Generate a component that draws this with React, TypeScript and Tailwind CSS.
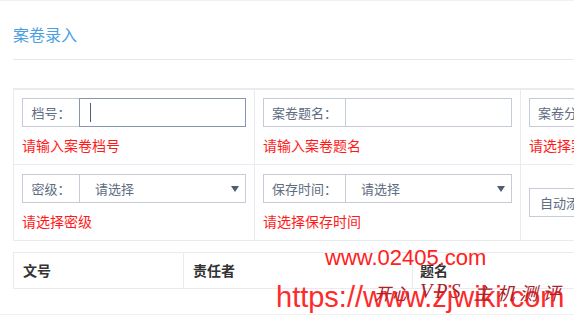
import React from "react";

interface FieldProps {
  label: string;
  labelWidth: string;
  error: string;
  select?: boolean;
  focused?: boolean;
}

function Field(props: Readonly<FieldProps>) {
  const { label, labelWidth, error, select, focused } = props;
  return (
    <div>
      <div className="flex h-[29px] text-[13px]">
        <div
          className={`${labelWidth} shrink-0 flex items-center justify-center border border-r-0 border-[#c5ccd8] text-[#5e6d82]`}
        >
          {label}
        </div>
        <div
          className={`relative flex-1 flex items-center border ${
            focused ? "border-[#8796ad]" : "border-[#c5ccd8]"
          }`}
        >
          {focused && <div className="ml-[10px] w-px h-[19px] bg-[#4a6080]" />}
          {select && (
            <>
              <span className="pl-[15px] text-[#5e6d82]">请选择</span>
              <svg
                className="absolute right-[6px] top-[11px]"
                width="8"
                height="6"
                viewBox="0 0 8 6"
              >
                <path d="M0 0H8L4 6Z" fill="#4d5d73" />
              </svg>
            </>
          )}
        </div>
      </div>
      <p className="mt-[8px] leading-[20px] text-[14px] text-[#ff1a1a] whitespace-nowrap">
        {error}
      </p>
    </div>
  );
}

export default function App() {
  return (
    <div className="relative w-[574px] h-[316px] overflow-hidden bg-white font-['Noto_Sans_CJK_SC',sans-serif]">
      <div className="h-px bg-[#eef0f4]" />
      <div className="pl-[13px]">
        <div className="h-[59px] border-b border-[#e8e8e8] pt-[22px]">
          <h1 className="text-[16px] leading-[22px] text-[#4a9fe3]">案卷录入</h1>
        </div>

        <div className="mt-[28px] grid grid-cols-[241px_266px_260px] w-max border-l border-t-2 border-[#e8ecf0]">
          <div className="h-[75px] border-r border-b border-[#e8ecf0] px-[8px] pt-[8px]">
            <Field label="档号：" labelWidth="w-[57px]" error="请输入案卷档号" focused />
          </div>
          <div className="h-[75px] border-r border-b border-[#e8ecf0] px-[8px] pt-[8px]">
            <Field label="案卷题名：" labelWidth="w-[82px]" error="请输入案卷题名" />
          </div>
          <div className="h-[75px] border-b border-[#e8ecf0] px-[8px] pt-[8px]">
            <Field label="案卷分类：" labelWidth="w-[82px]" error="请选择案卷分类" select />
          </div>

          <div className="h-[76px] border-r border-b border-[#e8ecf0] px-[8px] pt-[9px]">
            <Field label="密级：" labelWidth="w-[57px]" error="请选择密级" select />
          </div>
          <div className="h-[76px] border-r border-b border-[#e8ecf0] px-[8px] pt-[9px]">
            <Field label="保存时间：" labelWidth="w-[82px]" error="请选择保存时间" select />
          </div>
          <div className="h-[76px] border-b border-[#e8ecf0] px-[8px] pt-[23px]">
            <button className="h-[29px] px-[10px] border border-[#c5ccd8] text-[13px] text-[#5e6d82] whitespace-nowrap">
              自动添加
            </button>
          </div>
        </div>

        <div className="mt-[11px] grid grid-cols-[170px_229px_300px] w-max h-[37px] border border-[#e8ecf0] text-[14px] font-bold text-[#333]">
          <div className="flex items-center pl-[9px] border-r border-[#e8ecf0]">文号</div>
          <div className="flex items-center pl-[9px] border-r border-[#e8ecf0]">责任者</div>
          <div className="flex items-center pl-[7px]">题名</div>
        </div>
      </div>
      <div className="mt-[25px] h-px bg-[#eef0f4]" />

      <div className="absolute left-[325px] top-[247px] text-[22px] leading-none text-[#ff2020] font-['Liberation_Sans',sans-serif]">
        www.02405.com
      </div>
      <div className="absolute left-[276px] top-[283px] text-[29px] leading-none text-[#ff2a2a] font-['Liberation_Sans',sans-serif]">
        https://www.zjwiki.com
      </div>
      <div className="absolute left-[374px] top-[281px] flex items-end gap-[10px] italic text-[#a8232a] leading-none">
        <span className="text-[17px] tracking-[1px]">开心</span>
        <span className="text-[20px] font-['Liberation_Serif',serif] tracking-[3px]">VPS</span>
        <span className="text-[18px] tracking-[5px]">主机测评</span>
      </div>
    </div>
  );
}
